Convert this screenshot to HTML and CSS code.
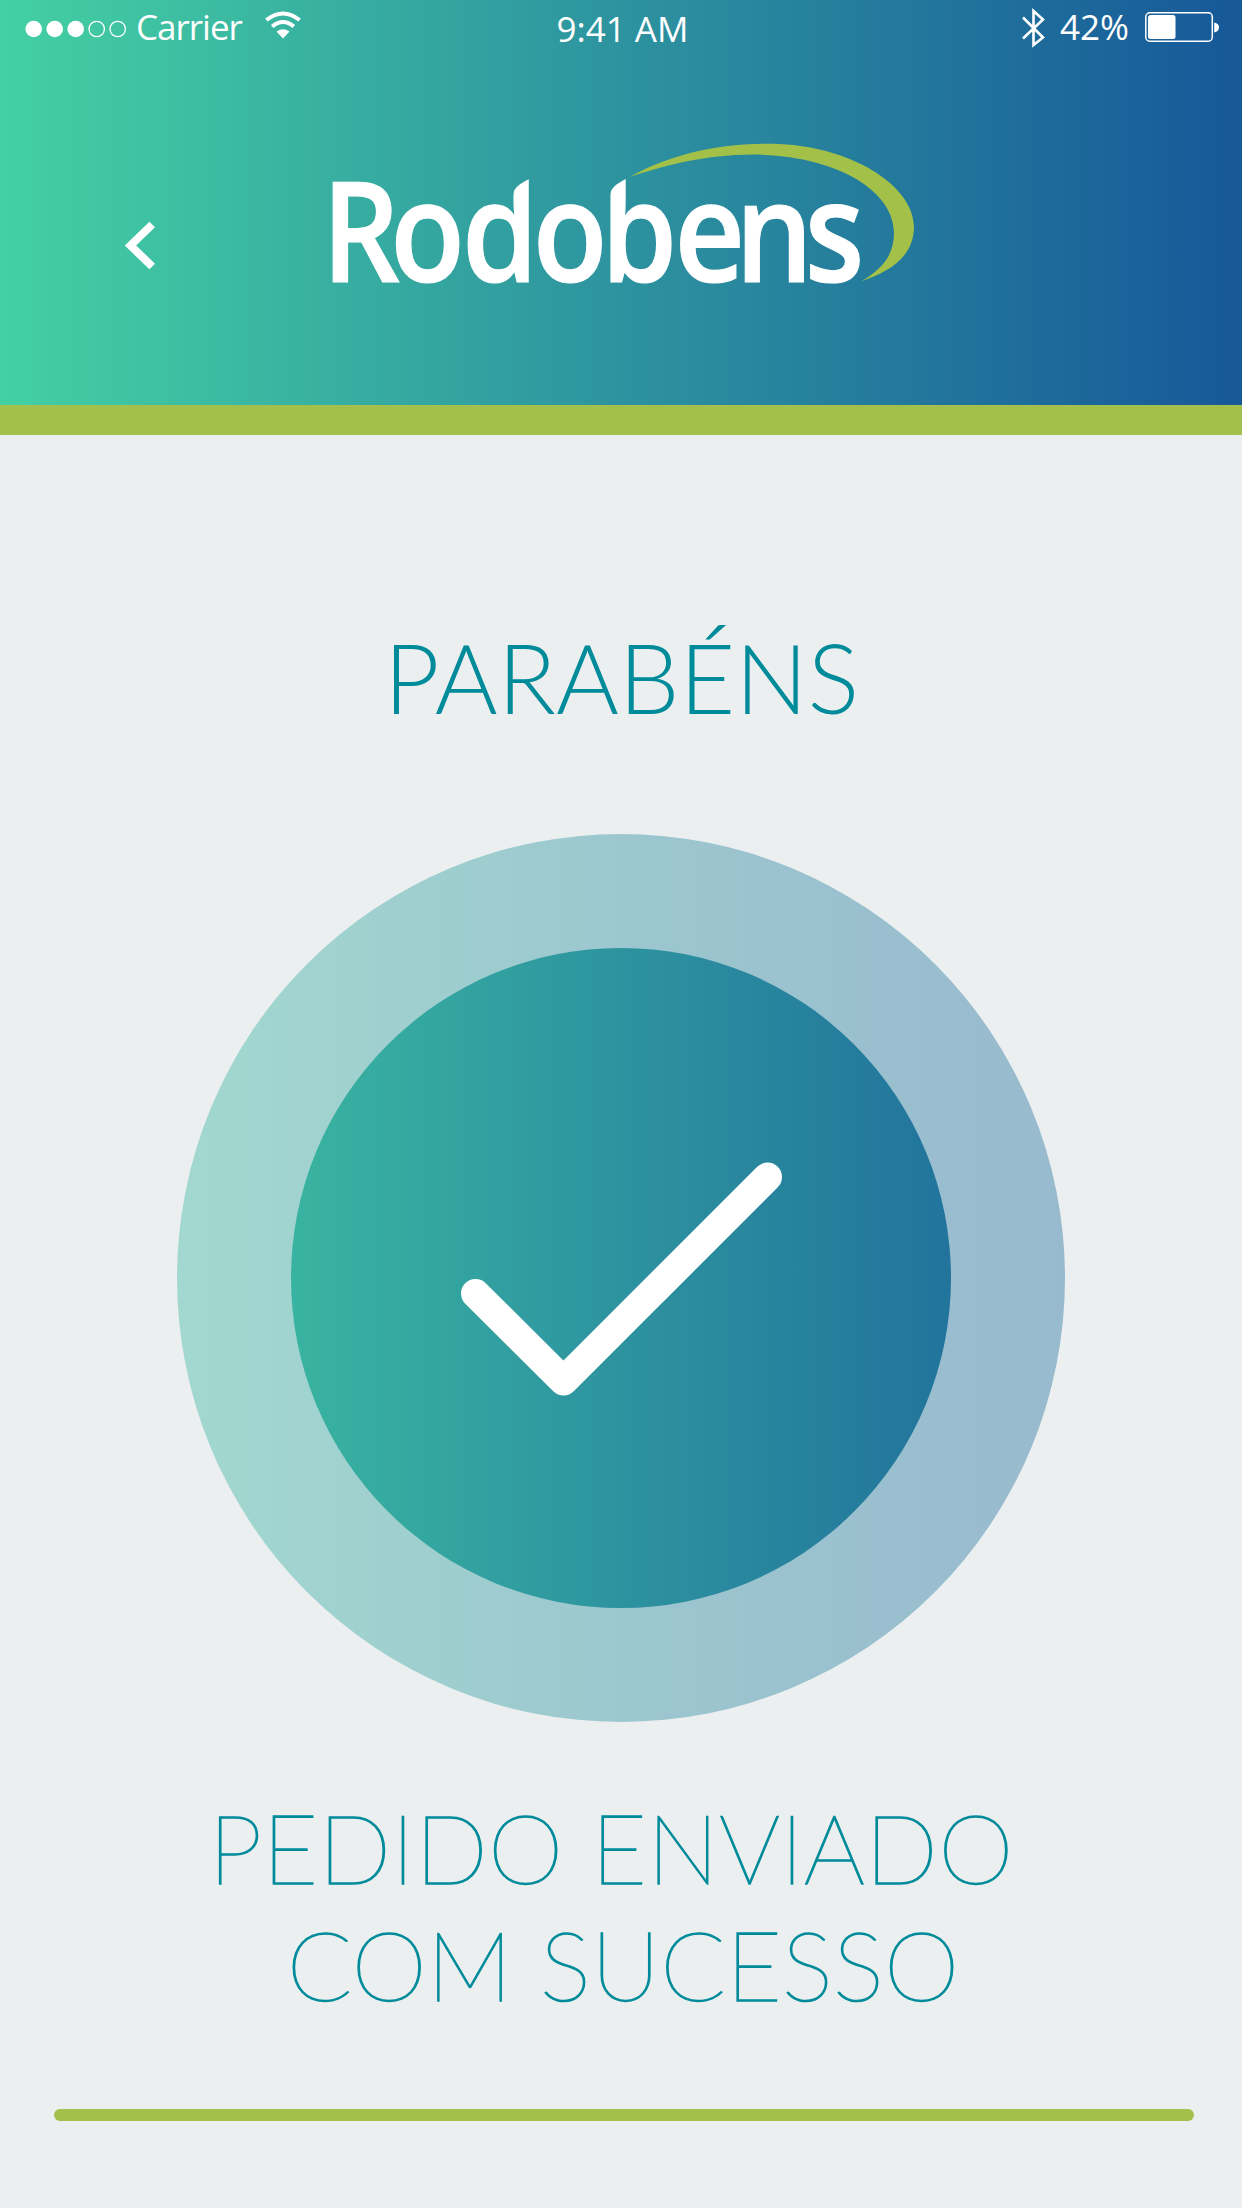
FILE: index.html
```html
<!DOCTYPE html>
<html lang="pt-BR">
<head>
<meta charset="utf-8">
<title>Rodobens</title>
<link rel="stylesheet" href="styles.css">
</head>
<body>
<header class="header">
  <div class="status">
    <div class="status-left">
      <svg class="signal" width="102" height="18" viewBox="0 0 102 18">
        <g fill="#fff"><circle cx="8.7" cy="9" r="8.3"/><circle cx="29.7" cy="9" r="8.3"/><circle cx="50.7" cy="9" r="8.3"/></g>
        <g fill="none" stroke="#fff" stroke-width="1.3"><circle cx="71.7" cy="9" r="7.7"/><circle cx="92.7" cy="9" r="7.7"/></g>
      </svg>
      <span class="carrier">Carrier</span>
      <svg class="wifi" width="36" height="28" viewBox="0 0 36 28">
        <g fill="none" stroke="#fff" stroke-width="4"><path d="M1.400 9Q18-4 34.600 9"/><path d="M7.200 15.500Q18 6.500 28.800 15.500"/></g>
        <path d="M11.500 20.500Q18 16 24.500 20.500L18 27.500Z" fill="#fff"/>
      </svg>
    </div>
    <span class="clock">9:41 AM</span>
    <div class="status-right">
      <svg class="bluetooth" width="24" height="40" viewBox="0 0 24 40" fill="none" stroke="#fff" stroke-width="2.600">
        <path d="M1 9.500L21 29.500L11.500 37V3L21 11.500L1 30.500"/>
      </svg>
      <span class="percent">42%</span>
      <svg class="battery" width="75" height="30" viewBox="0 0 75 30">
        <rect x=".8" y=".8" width="66.500" height="28.400" rx="4" fill="none" stroke="#fff" stroke-width="1.500"/>
        <rect x="3" y="3" width="27.500" height="24" rx="2.500" fill="#fff"/>
        <path d="M69.200 10.500Q74 11.500 74 15Q74 19.500 69.200 20.500Z" fill="#fff"/>
      </svg>
    </div>
  </div>
  <div class="brand-bar">
    <svg class="back" width="30" height="50" viewBox="0 0 30 50"><path d="M27.200 3.500L5.500 24.500L27.200 45.500" fill="none" stroke="#fff" stroke-width="8"/></svg>
    <svg class="logo" width="590" height="146" viewBox="325 140 590 146" role="img" aria-label="Rodobens">
      <clipPath id="wordmark">
        <path d="M325 140V286H915V140H626V179C616 184 610 188 610 197V201H529.500V179C519 184 513 188 513 197V201H505V150H325Z"/>
      </clipPath>
      <g clip-path="url(#wordmark)">
        <text class="wordmark" transform="translate(0 282) scale(.88 1)" x="365.500 443.500 525 605.500 683 766.500 835.500 914.500">Rodobens</text>
      </g>
      <path d="M629.500 177C678 150 730 143.500 772 143.800C850 145 913 185 914 226C914 258 888 272 862 281C880 270 894 257 894 233C894 190 835 155 752 154.500C705 155 670 164 629.500 177Z" fill="#a3c149"/>
    </svg>
  </div>
</header>
<main class="content">
  <h1 class="title">PARABÉNS</h1>
  <svg class="badge" width="888" height="888" viewBox="177 834 888 888">
    <defs>
      <linearGradient id="sea" gradientUnits="userSpaceOnUse" x1="0" y1="0" x2="1242" y2="0">
        <stop offset="0" stop-color="#44d0a3"/><stop offset=".5" stop-color="#2d939f"/><stop offset="1" stop-color="#175899"/>
      </linearGradient>
      <linearGradient id="halo">
        <stop offset="0" stop-color="#a2d8cf"/><stop offset=".5" stop-color="#9cc7cf"/><stop offset="1" stop-color="#98bace"/>
      </linearGradient>
    </defs>
    <circle cx="621" cy="1278" r="444" fill="url(#halo)"/>
    <circle cx="621" cy="1278" r="330" fill="url(#sea)"/>
    <path d="M475.500 1293.500L563.500 1381L767.500 1177" fill="none" stroke="#fff" stroke-width="29" stroke-linecap="round" stroke-linejoin="round"/>
  </svg>
  <p class="message"><span class="line first">PEDIDO ENVIADO</span><span class="line second">COM SUCESSO</span></p>
  <div class="divider"></div>
</main>
</body>
</html>
```
FILE: styles.css
```css
* { box-sizing: border-box; }
body { margin: 0; width: 1242px; height: 2208px; background: #ebeff0; font-family: Lato, sans-serif; overflow: hidden; }
svg { display: block; flex: none; }
.header { height: 435px; background: linear-gradient(90deg, #44d0a3, #2d939f 50%, #175899); border-bottom: 30px solid #a2c04b; }
.status { height: 58px; padding: 0 22px 0 25px; display: grid; grid-template-columns: 1fr auto 1fr; color: #fff; font: 35px/54px "Open Sans", sans-serif; }
.status-left, .status-right { display: flex; align-items: flex-start; }
.status-right { justify-content: flex-end; }
.signal { margin-top: 20px; }
.carrier { margin-left: 9px; letter-spacing: -1px; }
.wifi { margin: 11px 0 0 23px; }
.clock { line-height: 58px; }
.bluetooth { margin-top: 8px; }
.percent { margin: 0 16px 0 14px; }
.battery { margin-top: 12px; }
.brand-bar { display: flex; padding-left: 125px; }
.back { margin-top: 163px; }
.logo { margin: 82px 0 0 170px; }
.wordmark { font: 600 139px "Open Sans", sans-serif; fill: #fff; stroke: #fff; stroke-width: 1.2px; }
.content { display: flex; flex-direction: column; align-items: center; }
.title { margin: 182px 0 0 1px; font-size: 96px; font-weight: 300; line-height: 120px; color: #008b9b; }
.badge { margin-top: 97px; }
.message { margin: 66px 0 0; font-size: 96px; font-weight: 100; line-height: 117px; letter-spacing: .15px; color: #008b9b; text-align: center; -webkit-text-stroke: 1.5px #008b9b; }
.line { display: block; }
.first { padding-right: 20px; }
.second { padding-left: 4px; }
.divider { width: 1140px; height: 12px; margin-top: 87px; margin-left: 6px; border-radius: 6px; background: #a2c04b; }
```
